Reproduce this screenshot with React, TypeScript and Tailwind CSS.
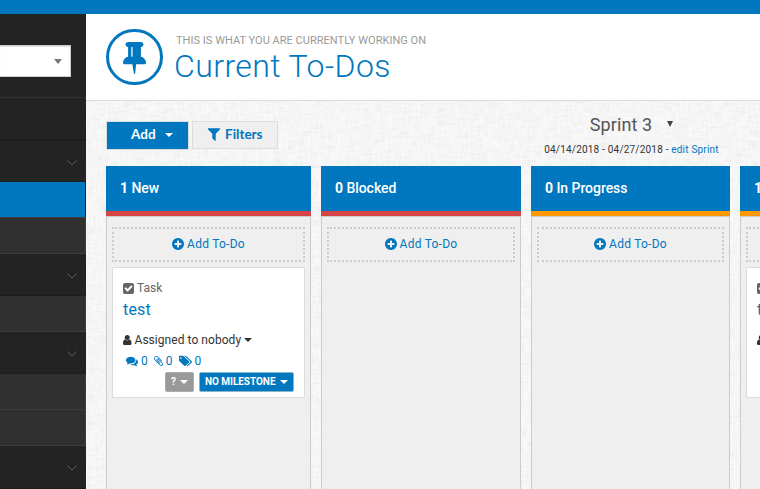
import React from "react";

const PATHS = {
  tack: "M800 864v-448q0-14-9-23t-23-9-23 9-9 23v448q0 14 9 23t23 9 23-9 9-23zm672 352q0 26-19 45t-45 19h-429l-51 483q-2 12-10.5 20.5t-20.5 8.5h-1q-27 0-32-27l-76-485h-404q-26 0-45-19t-19-45q0-123 78.5-221.5t177.5-98.5v-512q-52 0-90-38t-38-90 38-90 90-38h640q52 0 90 38t38 90-38 90-90 38v512q99 0 177.5 98.5t78.5 221.5z",
  plus: "M1344 960v-128q0-26-19-45t-45-19h-256v-256q0-26-19-45t-45-19h-128q-26 0-45 19t-19 45v256h-256q-26 0-45 19t-19 45v128q0 26 19 45t45 19h256v256q0 26 19 45t45 19h128q26 0 45-19t19-45v-256h256q26 0 45-19t19-45zm320-64q0 209-103 385.5t-279.5 279.5-385.5 103-385.5-103-279.5-279.5-103-385.5 103-385.5 279.5-279.5 385.5-103 385.5 103 279.5 279.5 103 385.5z",
  filter: "M1595 295q17 41-14 70l-493 493v742q0 42-39 59-13 5-25 5-27 0-45-19l-256-256q-19-19-19-45v-486l-493-493q-31-29-14-70 17-39 59-39h1280q42 0 59 39z",
  check: "M813 1299l614-614q19-19 19-45t-19-45l-102-102q-19-19-45-19t-45 19l-467 467-211-211q-19-19-45-19t-45 19l-102 102q-19 19-19 45t19 45l358 358q19 19 45 19t45-19zm851-883v960q0 119-84.5 203.5t-203.5 84.5h-960q-119 0-203.5-84.5t-84.5-203.5v-960q0-119 84.5-203.5t203.5-84.5h960q119 0 203.5 84.5t84.5 203.5z",
  user: "M1536 1399q0 109-62.5 187t-150.5 78h-854q-88 0-150.5-78t-62.5-187q0-85 8.5-160.5t31.5-152 58.5-131 94-89 134.5-34.5q131 128 313 128t313-128q76 0 134.5 34.5t94 89 58.5 131 31.5 152 8.5 160.5zm-256-887q0 159-112.5 271.5t-271.5 112.5-271.5-112.5-112.5-271.5 112.5-271.5 271.5-112.5 271.5 112.5 112.5 271.5z",
  comments: "M1408 768q0 139-94 257t-256.5 186.5-353.5 68.5q-86 0-176-16-124 88-278 128-36 9-86 16h-3q-11 0-20.5-8t-11.5-21q-1-3-1-6.5t.5-6.5 2-6l2.5-5 3.5-5.5 4-5 4.5-5 4-4.5q5-6 23-25t26-29.5 22.5-29 25-38.5 20.5-44q-124-72-195-177t-71-224q0-139 94-257t256.5-186.5 353.5-68.5 353.5 68.5 256.5 186.5 94 257zm384 256q0 120-71 224.5t-195 176.5q10 24 20.5 44t25 38.5 22.5 29 26 29.5 23 25q1 1 4 4.5t4.5 5 4 5 3.5 5.500l2.5 5 2 6 .5 6.5-1 6.5q-3 14-13 22t-22 7q-50-7-86-16-154-40-278-128-90 16-176 16-271 0-472-132 58 4 88 4 161 0 309-45t264-129q125-92 192-212t67-254q0-77-23-152 129 71 204 178t75 230z",
  clip: "M1596 1385q0 117-79 196t-196 79q-135 0-235-100l-777-776q-113-115-113-271 0-159 110-270t269-111q158 0 273 113l605 606q10 10 10 22 0 16-30.5 46.5t-46.5 30.5q-13 0-23-10l-606-607q-79-77-181-77-106 0-179 75t-73 181q0 105 76 181l776 777q63 63 145 63 64 0 106-42t42-106q0-82-63-145l-581-581q-26-24-60-24-29 0-48 19t-19 48q0 32 25 59l410 410q10 10 10 22 0 16-31 47t-47 31q-12 0-22-10l-410-410q-63-61-63-149 0-82 57-139t139-57q88 0 149 63l581 581q100 98 100 235z",
  tags: "M384 448q0-53-37.5-90.5t-90.5-37.5-90.5 37.5-37.5 90.5 37.5 90.5 90.5 37.5 90.5-37.5 37.5-90.5zm1067 576q0 53-37 90l-491 492q-39 37-91 37-53 0-90-37l-715-716q-38-37-64.5-101t-26.5-117v-416q0-52 38-90t90-38h416q53 0 117 26.5t102 64.5l715 714q37 39 37 91zm384 0q0 53-37 90l-491 492q-39 37-91 37-36 0-59-14t-53-45l470-470q37-37 37-90 0-52-37-91l-715-714q-38-38-102-64.5t-117-26.5h224q53 0 117 26.5t102 64.5l715 714q37 39 37 91z",
};

function Icon({ name, className = "", box = "0 0 1792 1792" }: { name: keyof typeof PATHS; className?: string; box?: string }) {
  return (
    <svg viewBox={box} preserveAspectRatio="none" className={`shrink-0 ${className}`} fill="currentColor">
      <path d={PATHS[name]} />
    </svg>
  );
}

function Caret({ className = "" }: { className?: string }) {
  return (
    <svg viewBox="0 0 8 4" className={`h-1 w-2 shrink-0 ${className}`} fill="currentColor">
      <path d="M0 0h8L4 4z" />
    </svg>
  );
}

function MenuHeading({ className = "", open = true }: { className?: string; open?: boolean }) {
  return (
    <div className={`flex shrink-0 justify-end border-[#1d1d1d] bg-[#232323] pr-[9px] ${className}`}>
      {open && (
        <svg viewBox="0 0 10 6" className="mt-[19px] h-1.5 w-2.5" fill="none" stroke="#5c5c5c">
          <path d="M.5 .5L5 5L9.500 .5" />
        </svg>
      )}
    </div>
  );
}

function MenuItem({ className = "h-9" }: { className?: string }) {
  return <div className={`shrink-0 border-r border-b border-[#3d3d3d] bg-[#303030] ${className}`} />;
}

function Sidebar() {
  return (
    <aside className="flex w-[86px] shrink-0 flex-col overflow-hidden bg-[#232323]">
      <div className="h-[84px] shrink-0 border-b border-[#333] pt-[31px]">
        <div className="flex h-8 w-[71px] items-center justify-end border border-l-0 border-[#ccc] bg-white pr-2 shadow-[inset_0_1px_1px_#ddd]">
          <svg viewBox="0 0 8 5" className="h-[5px] w-2" fill="#777"><path d="M0 0h8L4 5z" /></svg>
        </div>
      </div>
      <MenuHeading className="h-[43px] border-b-2" open={false} />
      <MenuHeading className="h-[41px] border-b" />
      <div className="h-[35px] shrink-0 border-r border-[#1d1d1d] bg-[#0077be]" />
      <MenuItem className="h-[37px] border-t" />
      <MenuHeading className="h-[42px] border-b" />
      <MenuItem />
      <MenuHeading className="h-[42px] border-b" />
      <MenuItem />
      <MenuItem />
      <MenuHeading className="h-[43px] border-b" />
    </aside>
  );
}

function Header() {
  return (
    <header className="flex h-[87px] shrink-0 border-b border-[#ddd] bg-white pl-5">
      <div className="mt-[15px] flex h-14 w-[57px] justify-center rounded-full border-3 border-[#0077be] pt-[10px] text-[#0077be]">
        <Icon name="tack" className="h-8 w-[23px]" box="320 128 1152 1664" />
      </div>
      <div className="ml-[11px] whitespace-nowrap">
        <div className="mt-[20px] ml-[2px] text-[11px] leading-[14px] tracking-[0.03px] text-[#999]">THIS IS WHAT YOU ARE CURRENTLY WORKING ON</div>
        <h1 className="mt-[-1px] text-[32px] leading-[38px] font-light tracking-[0.42px] text-[#0077be]">Current To-Dos</h1>
      </div>
    </header>
  );
}

function Toolbar() {
  return (
    <div className="flex h-[65px] shrink-0 pl-5">
      <button className="mt-5 flex h-[29px] w-[83px] items-center border border-[#ddd] bg-[#0077be] pb-[3px] pl-[24px] font-['Lato'] text-[13.5px] font-bold text-white">
        Add<Caret className="mt-[2px] ml-[9px]" />
      </button>
      <button className="mt-5 ml-[3px] flex h-7 w-[86px] items-center border border-[#ddd] bg-[#efefef] pb-[2px] pl-[13px] font-['Lato'] text-[13.5px] font-bold text-[#0077be]">
        <Icon name="filter" className="mr-[3px] size-4" />Filters
      </button>
      <div className="ml-[251px] flex w-[205px] flex-col items-center whitespace-nowrap">
        <div className="mt-[12px] flex h-6 items-center text-[18px] leading-6 tracking-[0.1px] text-[#555]">
          Sprint 3
          <svg viewBox="0 0 6 6" className="mb-[2px] ml-[15px] size-1.5" fill="#444"><path d="M0 0h6L3 6z" /></svg>
        </div>
        <div className="mt-[6px] text-[10px] leading-[14px] tracking-[0.2px] text-[#333]">
          04/14/2018 - 04/27/2018 - <span className="text-[#0077be]">edit Sprint</span>
        </div>
      </div>
    </div>
  );
}

function Card() {
  return (
    <article className="mt-[5px] h-[131px] border border-[#ddd] bg-white pl-[10px] whitespace-nowrap">
      <div className="mt-3 flex h-4 items-center text-[12px] text-[#666]">
        <Icon name="check" className="mr-[3px] size-[11px]" box="128 128 1536 1536" />Task
      </div>
      <div className="mt-[3px] text-[16px] leading-[22px] tracking-[0.2px] text-[#0077be]">test</div>
      <div className="mt-[11px] flex h-4 items-center text-[12px] tracking-[0.05px] text-[#333]">
        <Icon name="user" className="mr-[3px] h-[10px] w-[8.5px]" box="256 128 1280 1536" />Assigned to nobody<Caret className="ml-[3px]" />
      </div>
      <div className="mt-[5px] ml-[3px] flex h-4 items-center text-[12px] text-[#0077be]">
        <Icon name="comments" className="mr-[3px] size-3" />0
        <Icon name="clip" className="mr-[3px] ml-[6px] h-[10px] w-[9px]" box="192 128 1408 1536" />0
        <Icon name="tags" className="mr-[3px] ml-[6px] h-3 w-[13px]" box="0 0 1835 1792" />0
      </div>
      <div className="mt-[3px] flex h-5 w-[171px] justify-end gap-[5px] text-[10px] font-bold text-white">
        <span className="flex w-[29px] items-center justify-between rounded-[2px] border border-[#aaa] bg-[#999] px-[5px] pb-px">?<Caret /></span>
        <span className="flex w-[95px] items-center justify-between rounded-[2px] border border-[#8ab4cc] bg-[#0077be] px-[5px] pb-px tracking-[-0.04px]">NO MILESTONE<Caret /></span>
      </div>
    </article>
  );
}

interface ColumnProps { count: number; title?: string; width: string; stripe: string; card?: boolean }

function Column({ count, title, width, stripe, card }: ColumnProps) {
  return (
    <section className={`flex h-full shrink-0 flex-col ${width}`}>
      <h2 className={`h-[50px] shrink-0 border-b-5 bg-[#0077be] pl-[14px] text-[14px] leading-[45px] font-medium tracking-[-0.05px] whitespace-nowrap text-white ${stripe}`}>
        <b className="font-bold">{count}</b> {title}
      </h2>
      <div className="flex-1 border border-b-0 border-[#ccc] bg-[#efefef] px-[5px] pt-[10px]">
        <div className="flex h-[35px] items-center justify-center border-2 border-dotted border-[#ccc] pb-[2px] text-[12px] tracking-[0.25px] text-[#0077be]">
          {title && <><Icon name="plus" className="mr-[3px] size-3" box="128 128 1536 1536" />Add To-Do</>}
        </div>
        {card && <Card />}
      </div>
    </section>
  );
}

/* Fine woven-paper texture behind the board. */
function Texture() {
  return (
    <svg className="absolute inset-0 h-full w-full opacity-50" aria-hidden="true">
      <filter id="weft" colorInterpolationFilters="sRGB"><feTurbulence type="fractalNoise" baseFrequency="0.08 0.4" numOctaves="2" seed="4" /><feColorMatrix values="0 0 0 0 .86  0 0 0 0 .86  0 0 0 0 .86  1.6 0 0 0 -.65" /></filter>
      <filter id="warp" colorInterpolationFilters="sRGB"><feTurbulence type="fractalNoise" baseFrequency="0.4 0.08" numOctaves="2" seed="9" /><feColorMatrix values="0 0 0 0 1  0 0 0 0 1  0 0 0 0 1  2.2 0 0 0 -.9" /></filter>
      <rect width="100%" height="100%" filter="url(#weft)" />
      <rect width="100%" height="100%" filter="url(#warp)" />
    </svg>
  );
}

export default function App() {
  return (
    <div className="flex h-[489px] w-[760px] flex-col overflow-hidden bg-[#f6f6f6] font-['Roboto',sans-serif]">
      <div className="h-[14px] shrink-0 bg-[#0077be]" />
      <div className="flex min-h-0 flex-1">
        <Sidebar />
        <main className="flex min-w-0 flex-1 flex-col overflow-hidden">
          <Header />
          <div className="relative min-h-0 flex-1 bg-[#f6f6f6]">
            <Texture />
            <div className="relative flex h-full flex-col">
              <Toolbar />
              <div className="flex min-h-0 flex-1 gap-[10px] pl-5">
                <Column count={1} title="New" width="w-[205px]" stripe="border-[#d64545]" card />
                <Column count={0} title="Blocked" width="w-[200px]" stripe="border-[#d64545]" />
                <Column count={0} title="In Progress" width="w-[199px]" stripe="border-[#ff9800]" />
                <Column count={1} width="w-[200px]" stripe="border-[#ff9800]" card />
              </div>
            </div>
          </div>
        </main>
      </div>
    </div>
  );
}
